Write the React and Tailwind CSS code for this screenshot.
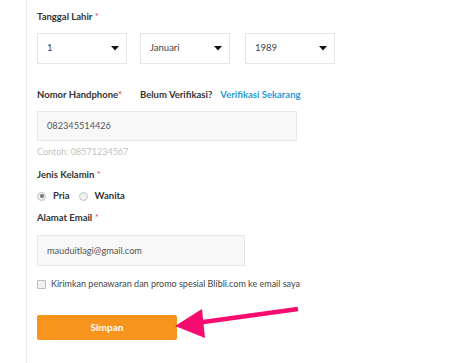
import React from "react";

function Caret() {
  return (
    <svg width="8" height="5" viewBox="0 0 8 5" className="shrink-0">
      <path d="M0 0 H8 L4 4.5 Z" fill="#111" />
    </svg>
  );
}

function Select({ value, className }) {
  return (
    <div
      className={`flex h-[31px] w-[90px] items-center justify-between border border-[#e6e6e6] bg-white pl-[9px] pr-[7px] text-[9.5px] text-[#444] ${className}`}
    >
      <span>{value}</span>
      <Caret />
    </div>
  );
}

function Label({ children, className = "" }) {
  return (
    <p className={`text-[9.5px] leading-[14px] font-bold text-[#333] ${className}`}>
      {children}
      <span className="text-[#e8505b] font-normal"> *</span>
    </p>
  );
}

function Radio({ checked, label }) {
  return (
    <label className="flex items-center gap-[7px]">
      <span className="flex h-[9px] w-[9px] items-center justify-center rounded-full border border-[#c4c4c4] bg-[#f0f0f0]">
        {checked && <span className="h-[4px] w-[4px] rounded-full bg-[#777]" />}
      </span>
      <span className="text-[9.5px] font-bold text-[#333]">{label}</span>
    </label>
  );
}

export default function App() {
  return (
    <div
      className="relative h-[363px] w-[456px] overflow-hidden bg-white"
      style={{ fontFamily: "Lato, 'Open Sans', sans-serif" }}
    >
      <div className="ml-[26px] flex h-full flex-col border-l border-[#ececec] pl-[10px] pt-[10px]">
        <Label>Tanggal Lahir</Label>
        <div className="mt-[9px] flex">
          <Select value="1" />
          <Select value="Januari" className="ml-[13px]" />
          <Select value="1989" className="ml-[15px]" />
        </div>

        <div className="mt-[24px] flex items-center text-[9.5px] leading-[14px] font-bold">
          <span className="w-[103px] text-[#333]">
            Nomor Handphone<span className="text-[#e8505b]">*</span>
          </span>
          <span className="text-[#333]">Belum Verifikasi?</span>
          <span className="ml-[8px] text-[#2a9ad8]">Verifikasi Sekarang</span>
        </div>
        <div className="mt-[9px] flex h-[30px] w-[260px] items-center border border-[#e6e6e6] bg-[#f8f8f8] pl-[9px] text-[9.2px] text-[#555]">
          082345514426
        </div>
        <p className="mt-[4px] text-[9px] leading-[14px] text-[#c2c2c2]">Contoh: 08571234567</p>

        <Label className="mt-[9px]">Jenis Kelamin</Label>
        <div className="mt-[7px] flex h-[14px] items-center gap-[9px]">
          <Radio checked label="Pria" />
          <Radio label="Wanita" />
        </div>

        <Label className="mt-[8px]">Alamat Email</Label>
        <div className="mt-[10px] flex h-[31px] w-[208px] items-center border border-[#e6e6e6] bg-[#f8f8f8] pl-[9px] text-[9.2px] text-[#555]">
          mauduitlagi@gmail.com
        </div>

        <label className="mt-[11px] flex h-[14px] items-center gap-[5px]">
          <span className="h-[9px] w-[9px] rounded-[1px] border border-[#bdbdbd] bg-[#f2f2f2]" />
          <span className="text-[9px] text-[#444]">
            Kirimkan penawaran dan promo spesial Blibli.com ke email saya
          </span>
        </label>

        <button className="mt-[24px] flex h-[25px] w-[140px] items-center justify-center rounded-[2px] bg-[#f7941d] text-[10px] font-bold text-white">
          Simpan
        </button>
      </div>

      <svg
        className="pointer-events-none absolute left-0 top-0"
        width="456"
        height="363"
        viewBox="0 0 456 363"
      >
        <line x1="298" y1="309" x2="196" y2="323" stroke="#f80b6e" strokeWidth="4.5" />
        <path d="M175 326 L202 309 L205 338 Z" fill="#f80b6e" />
      </svg>
    </div>
  );
}
